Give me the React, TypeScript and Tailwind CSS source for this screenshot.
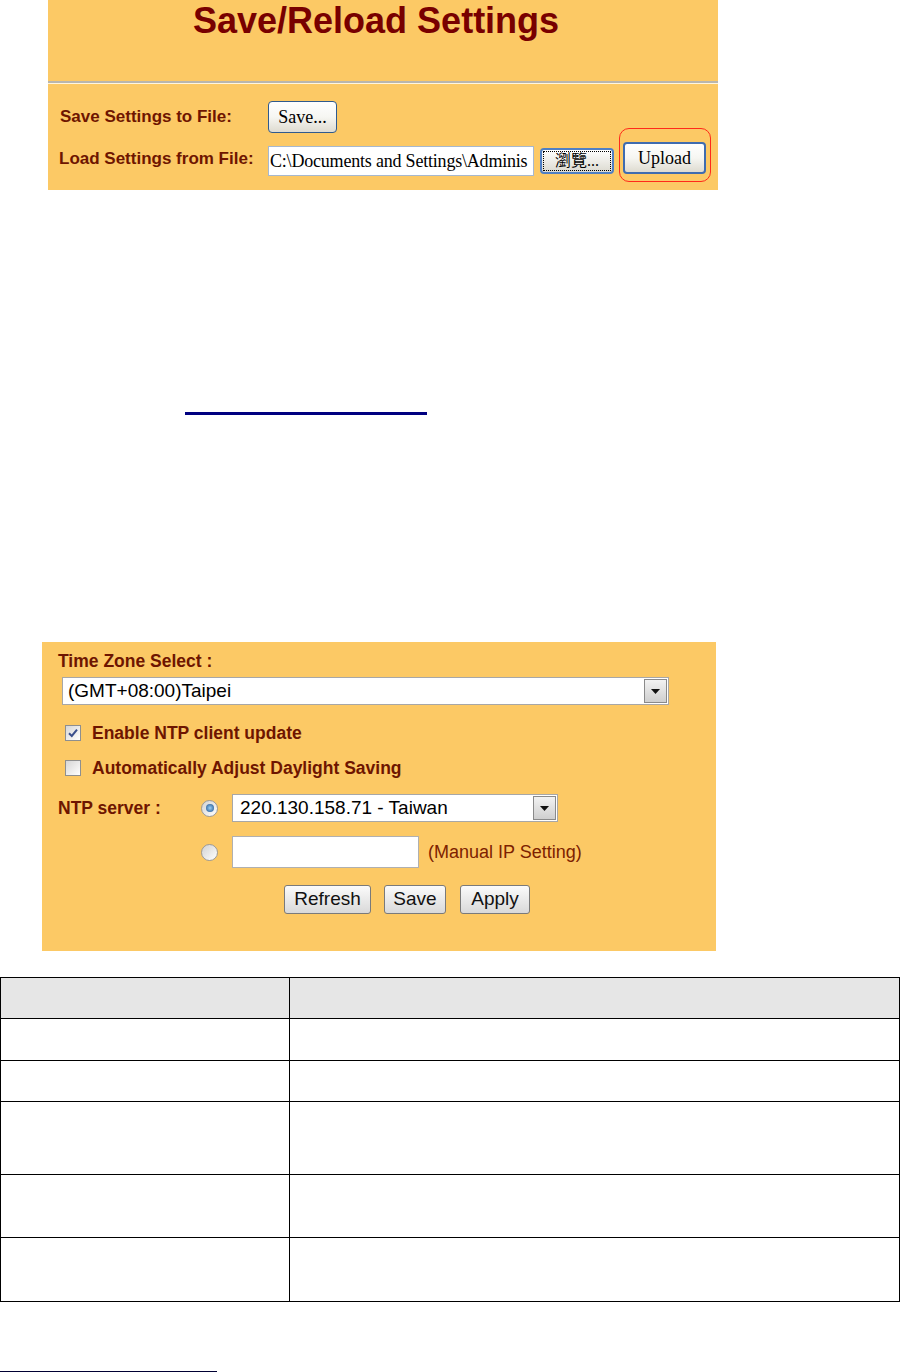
const sans = { fontFamily: '"Liberation Sans", Arial, sans-serif' };
const serif = { fontFamily: '"Liberation Serif", "Noto Sans CJK TC", serif' };

function XpButton({ children, className = "" }: { children: React.ReactNode; className?: string }) {
  return (
    <div
      className={`flex items-center justify-center rounded-[4px] border border-[#2f5a8e] bg-linear-to-b from-white via-[#f6f6f2] to-[#dedbd0] text-[18px] leading-none text-black ${className}`}
      style={serif}
    >
      {children}
    </div>
  );
}

function GrayButton({ children }: { children: React.ReactNode }) {
  return (
    <div
      className="flex h-[29px] items-center justify-center rounded-[3px] border border-[#7a7a7a] bg-linear-to-b from-[#fbfbfb] to-[#d9d9d9] text-[19px] text-[#111]"
      style={sans}
    >
      {children}
    </div>
  );
}

function Checkbox({ checked }: { checked?: boolean }) {
  return (
    <div className="flex h-[16px] w-[16px] items-center justify-center border border-[#8e8f8f] bg-linear-to-br from-[#d6d6d6] to-white">
      {checked && (
        <svg width="12" height="12" viewBox="0 0 12 12">
          <path d="M2 6.2 L4.8 9 L10 2.6" fill="none" stroke="#3a4f8c" strokeWidth="2" />
        </svg>
      )}
    </div>
  );
}

function Radio({ checked }: { checked?: boolean }) {
  return (
    <div className="flex h-[17px] w-[17px] items-center justify-center rounded-full border border-[#9a9a9a] bg-linear-to-br from-[#d2d2d2] to-white">
      {checked && <div className="h-[8px] w-[8px] rounded-full bg-radial from-[#9ad0f5] to-[#1b4f8a]" />}
    </div>
  );
}

function SelectBox({ value, width, pad }: { value: string; width: string; pad: string }) {
  return (
    <div className={`flex h-[28px] ${width} items-stretch border border-[#a7a7a7] bg-white`}>
      <div className={`flex flex-1 items-center ${pad} text-[19px] text-black`} style={sans}>
        {value}
      </div>
      <div className="m-[1px] flex w-[23px] items-center justify-center border border-[#8a8a8a] bg-linear-to-b from-[#f2f2f2] to-[#cfcfcf]">
        <svg width="9" height="5" viewBox="0 0 9 5">
          <path d="M0 0 H9 L4.5 5 Z" fill="#111" />
        </svg>
      </div>
    </div>
  );
}

export default function App() {
  return (
    <div className="h-[1372px] w-[900px] overflow-hidden bg-white">
      {/* Save/Reload panel */}
      <div className="ml-[48px] h-[190px] w-[670px] bg-[#fcc965]">
        <div className="h-[81px] pl-[145px]">
          <h1 className="text-[36px] font-bold leading-[42px] text-[#780000]" style={sans}>
            Save/Reload Settings
          </h1>
        </div>
        <div className="h-[3px] border-t-2 border-b border-t-[#b9b6ae] border-b-[#fff6e0]" />
        <div className="flex flex-col gap-[10px] pl-[12px] pt-[17px]">
          <div className="flex h-[32px] items-center">
            <div className="w-[208px] text-[17px] font-bold text-[#6e1500]" style={sans}>
              Save Settings to File:
            </div>
            <XpButton className="h-[32px] w-[69px]">Save...</XpButton>
          </div>
          <div className="flex h-[32px] items-center">
            <div className="-ml-[1px] w-[209px] text-[17px] font-bold text-[#6e1500]" style={sans}>
              Load Settings from File:
            </div>
            <div
              className="mt-[4px] flex h-[30px] w-[266px] items-center overflow-hidden whitespace-nowrap border border-[#a6b8cf] bg-white pl-[1px] text-[18px] tracking-[-0.2px] text-black"
              style={serif}
            >
              <span>C:\Documents and Settings\Adminis</span>
            </div>
            <div className="ml-[6px] mt-[4px] flex h-[26px] w-[74px] items-center justify-center rounded-[4px] border-2 border-[#4f7fc4] bg-linear-to-b from-white to-[#dcdad0] p-[1px]">
              <div
                className="flex h-full w-full items-center justify-center border border-dotted border-black text-[16px] leading-none"
                style={serif}
              >
                瀏覽...
              </div>
            </div>
            <div className="relative ml-[9px]">
              <XpButton className="-mt-[2px] h-[32px] w-[83px] border-2 border-[#3f6cb0]">Upload</XpButton>
              <div className="absolute -bottom-[8px] -left-[4px] -right-[5px] -top-[16px] rounded-[10px] border border-[#ff2a1a]" />
            </div>
          </div>
        </div>
      </div>

      {/* hyperlink underline */}
      <div className="ml-[185px] mt-[222px] h-[3px] w-[242px] bg-[#000080]" />

      {/* Time zone panel */}
      <div className="ml-[42px] mt-[227px] h-[309px] w-[674px] bg-[#fcc965]" style={sans}>
        <div className="pl-[16px] pt-[8px] text-[17.5px] font-bold leading-[22px] text-[#6e1500]">Time Zone Select :</div>
        <div className="ml-[20px] mt-[5px]">
          <SelectBox value="(GMT+08:00)Taipei" width="w-[607px]" pad="pl-[5px]" />
        </div>
        <div className="ml-[23px] mt-[17px] flex h-[22px] items-center gap-[11px]">
          <Checkbox checked />
          <span className="text-[17.5px] font-bold text-[#6e1500]">Enable NTP client update</span>
        </div>
        <div className="ml-[23px] mt-[13px] flex h-[22px] items-center gap-[11px]">
          <Checkbox />
          <span className="text-[17.5px] font-bold text-[#6e1500]">Automatically Adjust Daylight Saving</span>
        </div>
        <div className="ml-[16px] mt-[15px] flex h-[28px] items-center">
          <div className="w-[143px] text-[17.5px] font-bold text-[#6e1500]">NTP server :</div>
          <Radio checked />
          <div className="ml-[14px]">
            <SelectBox value="220.130.158.71 - Taiwan" width="w-[326px]" pad="pl-[7px]" />
          </div>
        </div>
        <div className="ml-[159px] mt-[14px] flex h-[32px] items-center">
          <Radio />
          <div className="ml-[14px] h-[32px] w-[187px] border border-[#b0b0b0] bg-white" />
          <span className="ml-[9px] text-[18px] text-[#7d2100]">(Manual IP Setting)</span>
        </div>
        <div className="ml-[242px] mt-[17px] flex gap-[13px]">
          <div className="w-[87px]">
            <GrayButton>Refresh</GrayButton>
          </div>
          <div className="w-[62px]">
            <GrayButton>Save</GrayButton>
          </div>
          <div className="ml-[1px] w-[70px]">
            <GrayButton>Apply</GrayButton>
          </div>
        </div>
      </div>

      {/* empty description table */}
      <table className="mt-[26px] w-[900px] border-collapse">
        <tbody>
          <tr className="h-[41px] bg-[#e6e6e6]">
            <td className="w-[289px] border border-black" />
            <td className="border border-black" />
          </tr>
          <tr className="h-[42px]">
            <td className="border border-black" />
            <td className="border border-black" />
          </tr>
          <tr className="h-[41px]">
            <td className="border border-black" />
            <td className="border border-black" />
          </tr>
          <tr className="h-[73px]">
            <td className="border border-black" />
            <td className="border border-black" />
          </tr>
          <tr className="h-[63px]">
            <td className="border border-black" />
            <td className="border border-black" />
          </tr>
          <tr className="h-[64px]">
            <td className="border border-black" />
            <td className="border border-black" />
          </tr>
        </tbody>
      </table>

      {/* footnote separator */}
      <div className="mt-[69px] h-[1px] w-[217px] bg-[#000033]" />
    </div>
  );
}
